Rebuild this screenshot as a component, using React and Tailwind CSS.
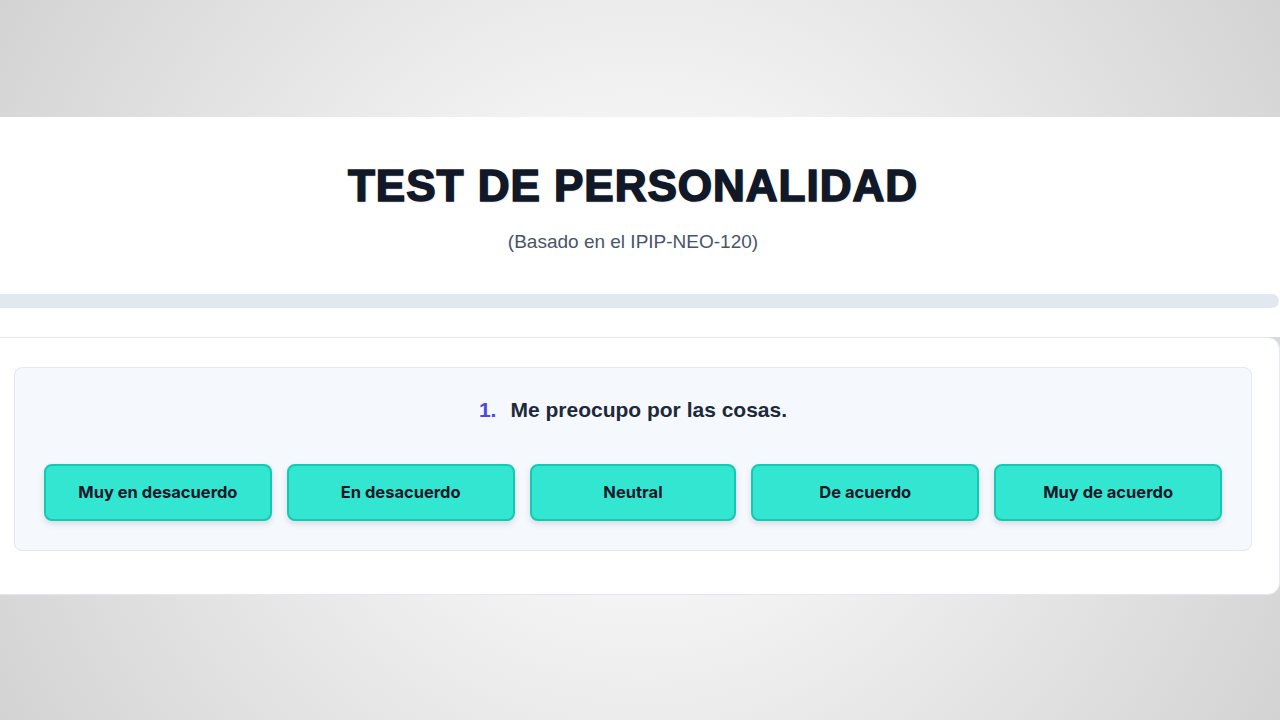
import React, { useState } from 'react';

const options = [
  { label: 'Muy en desacuerdo', width: 'w-[228px]' },
  { label: 'En desacuerdo', width: 'w-[228px]' },
  { label: 'Neutral', width: 'w-[207px]' },
  { label: 'De acuerdo', width: 'w-[228px]' },
  { label: 'Muy de acuerdo', width: 'w-[228px]' },
];

export default function App() {
  const [answer, setAnswer] = useState(null);

  return (
    <div className="min-h-screen overflow-hidden pt-[117px] pb-[124px] bg-[radial-gradient(circle,#f7f7f7_25%,#d3d3d3_100%)] font-['Liberation_Sans',Arial,sans-serif]">
      <div className="w-[1292px] ml-[-12px]">
        <header className="bg-white h-[177px] flex flex-col items-center pt-[43px] pr-[2px]">
          <h1 className="text-[44px] leading-[52px] font-bold tracking-[1px] text-[#111827] [-webkit-text-stroke:1.6px_#111827] [text-shadow:1px_1px_2px_rgba(0,0,0,0.2)]">
            TEST DE PERSONALIDAD
          </h1>
          <p className="mt-4 text-[19px] leading-7 text-[#475569]">(Basado en el IPIP-NEO-120)</p>
        </header>

        <div className="bg-white">
          <div className="h-[14px] bg-[#e2e8f0] rounded-r-full mr-[1px]" />
        </div>
        <div className="h-[29px] bg-white" />

        <section className="bg-white border border-[#e2e8f0] rounded-xl pt-[29px] pl-[25px] pr-[27px] pb-[43px]">
          <div className="bg-[#f5f8fc] border border-[#e4e9ef] rounded-lg px-[29px] pt-[28px] pb-[29px]">
            <h2 className="flex justify-center items-baseline text-[21px] leading-7 font-bold text-[#1e293b]">
              <span className="text-[#4f46e5] mr-[14px]">1.</span>
              Me preocupo por las cosas.
            </h2>
            <div className="mt-[40px] flex justify-center gap-[15px]">
              {options.map((o) => (
                <button
                  key={o.label}
                  type="button"
                  onClick={() => setAnswer(o.label)}
                  className={`${o.width} h-[57px] rounded-lg border-2 border-[#12c9b1] bg-[#33e6d1] shadow-[0_3px_6px_rgba(0,0,0,0.12)] text-[16.5px] font-bold text-[#111827] font-['Inter',sans-serif] ${answer === o.label ? 'ring-2 ring-[#0d9488]' : ''}`}
                >
                  {o.label}
                </button>
              ))}
            </div>
          </div>
        </section>
      </div>
    </div>
  );
}
